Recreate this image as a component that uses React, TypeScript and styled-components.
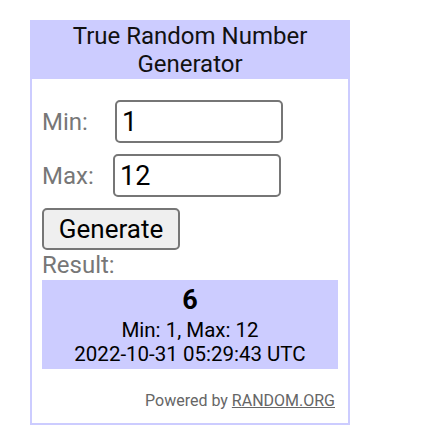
import React, { useState } from 'react';
import styled, { createGlobalStyle } from 'styled-components';

const GlobalStyle = createGlobalStyle`
  body {
    margin: 0;
    background: #fff;
    font-family: Roboto, "Liberation Sans", sans-serif;
  }
`;

export const App = () => {
  const [min, setMin] = useState('1');
  const [max, setMax] = useState('12');

  return (
    <>
      <GlobalStyle />
      <Widget>
        <Title>True Random Number Generator</Title>
        <Body>
          <Field>
            <Label $width={73}>Min:</Label>
            <NumberInput value={min} onChange={(e) => setMin(e.target.value)} />
          </Field>
          <Field>
            <Label $width={71}>Max:</Label>
            <NumberInput value={max} onChange={(e) => setMax(e.target.value)} />
          </Field>
          <GenerateButton type="button">Generate</GenerateButton>
          <ResultLabel>Result:</ResultLabel>
          <ResultBox>
            <ResultNumber>6</ResultNumber>
            <ResultLine>Min: 1, Max: 12</ResultLine>
            <ResultLine>2022-10-31 05:29:43 UTC</ResultLine>
          </ResultBox>
          <Credit>
            Powered by <a href="#">RANDOM.ORG</a>
          </Credit>
        </Body>
      </Widget>
    </>
  );
};

const Widget = styled.div`
  width: 320px;
  box-sizing: border-box;
  margin: 20px 0 0 30px;
  border: 2px solid #ccf;
  background: #fff;
`;

const Title = styled.div`
  padding-bottom: 1px;
  background: #ccf;
  color: #111;
  font-size: 24px;
  line-height: 28px;
  text-align: center;
`;

const Body = styled.div`
  display: flex;
  flex-direction: column;
  padding: 21px 10px 12px;
`;

const Field = styled.div`
  display: flex;
  align-items: center;
  margin-bottom: 11px;
`;

const Label = styled.label<{ $width: number }>`
  width: ${(p) => p.$width}px;
  color: #777;
  font-size: 24px;
  line-height: 28px;
`;

const NumberInput = styled.input`
  width: 168px;
  height: 43px;
  box-sizing: border-box;
  padding: 0 5px;
  border: 2px solid #767676;
  border-radius: 5px;
  outline: none;
  color: #000;
  font-family: inherit;
  font-size: 27px;
`;

const GenerateButton = styled.button`
  align-self: flex-start;
  width: 138px;
  height: 42px;
  padding: 0;
  border: 2px solid #767676;
  border-radius: 5px;
  background: #efefef;
  color: #000;
  font-family: inherit;
  font-size: 26px;
`;

const ResultLabel = styled.div`
  margin-top: 1px;
  color: #777;
  font-size: 24px;
  line-height: 28px;
`;

const ResultBox = styled.div`
  margin-top: 1px;
  padding: 3px 0;
  background: #ccf;
  color: #000;
  text-align: center;
`;

const ResultNumber = styled.div`
  font-size: 27px;
  font-weight: 700;
  line-height: 35px;
`;

const ResultLine = styled.div`
  font-size: 20.5px;
  line-height: 24px;
`;

const Credit = styled.div`
  margin-top: 22px;
  padding-right: 3px;
  color: #666;
  font-size: 16px;
  line-height: 20px;
  text-align: right;

  a {
    color: #666;
    text-decoration: underline;
  }
`;

export default App;
